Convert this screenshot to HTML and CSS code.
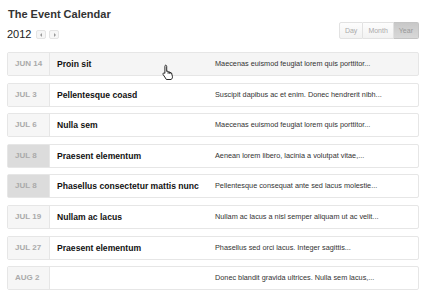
FILE: index.html
```html
<!DOCTYPE html>
<html lang="en">
  <head>
    <meta charset="UTF-8" />
    <title>The Event Calendar</title>
    <link rel="stylesheet" href="styles.css">
  </head>
  <body>
    <div class="calendar">
      <h1>The Event Calendar</h1>

      <div class="toolbar">
        <div class="year-nav">
          <span class="year">2012</span>
          <button class="nav-btn prev"></button>
          <button class="nav-btn next"></button>
        </div>
        <div class="views">
          <button class="view-btn">Day</button>
          <button class="view-btn">Month</button>
          <button class="view-btn active">Year</button>
        </div>
      </div>

      <div class="event-list">
        <div class="event-item hover">
          <div class="event-date">JUN 14</div>
          <div class="event-title">Proin sit</div>
          <div class="event-desc">Maecenas euismod feugiat lorem quis porttitor...</div>
          <svg class="cursor" width="13" height="16" viewBox="0 0 13 16">
            <path d="M4.5 1.2c.7 0 1.2.5 1.2 1.2v5l.3-.1c.6-.3 1.3 0 1.5.5l.1.2c.6-.3 1.3 0 1.5.6.6-.2 1.3.1 1.5.7l.8 3c.3 1.3-.2 2.5-1.3 3.2H5.4L2.3 10.8c-.5-.5-.5-1.2 0-1.6.5-.4 1.1-.3 1.6.1V2.4c0-.7.3-1.2.6-1.2z" fill="#fff" stroke="#111" stroke-width="0.9" stroke-linejoin="round"/>
            <path d="M7.1 7.6v2.2M8.6 8v1.8M10.1 8.6v1.4" stroke="#111" stroke-width="0.8"/>
          </svg>
        </div>
        <div class="event-item">
          <div class="event-date">JUL 3</div>
          <div class="event-title">Pellentesque coasd</div>
          <div class="event-desc">Suscipit dapibus ac et enim. Donec hendrerit nibh...</div>
        </div>
        <div class="event-item">
          <div class="event-date">JUL 6</div>
          <div class="event-title">Nulla sem</div>
          <div class="event-desc">Maecenas euismod feugiat lorem quis porttitor...</div>
        </div>
        <div class="event-item today">
          <div class="event-date">JUL 8</div>
          <div class="event-title">Praesent elementum</div>
          <div class="event-desc">Aenean lorem libero, lacinia a volutpat vitae,...</div>
        </div>
        <div class="event-item today">
          <div class="event-date">JUL 8</div>
          <div class="event-title">Phasellus consectetur mattis nunc</div>
          <div class="event-desc">Pellentesque consequat ante sed lacus molestie...</div>
        </div>
        <div class="event-item">
          <div class="event-date">JUL 19</div>
          <div class="event-title">Nullam ac lacus</div>
          <div class="event-desc">Nullam ac lacus a nisl semper aliquam ut ac velit...</div>
        </div>
        <div class="event-item">
          <div class="event-date">JUL 27</div>
          <div class="event-title">Praesent elementum</div>
          <div class="event-desc">Phasellus sed orci lacus. Integer sagittis...</div>
        </div>
        <div class="event-item">
          <div class="event-date">AUG 2</div>
          <div class="event-title"></div>
          <div class="event-desc">Donec blandit gravida ultrices. Nulla sem lacus,...</div>
        </div>
      </div>
    </div>
  </body>
</html>
```

FILE: styles.css
```css
body {
  font-family: "Liberation Sans", Arial, sans-serif;
  margin: 0;
  padding: 0 9px 0 7px;
  background: #fff;
  color: #222;
}

h1 {
  font-size: 11px;
  font-weight: bold;
  color: #333;
  margin: 0;
  padding-top: 8px;
  line-height: 12px;
  padding-left: 1px;
}

.toolbar {
  display: flex;
  justify-content: space-between;
  align-items: flex-start;
  margin-top: 2px;
  height: 30px;
}

.year-nav {
  display: flex;
  align-items: center;
  padding-top: 6px;
}

.year {
  font-size: 11px;
  color: #222;
  line-height: 12px;
  margin-right: 5px;
}

.nav-btn {
  width: 10px;
  height: 9px;
  padding: 0;
  margin: 0 3px 0 0;
  border: 1px solid #e4e4e4;
  border-radius: 2px;
  background: #f6f6f6;
  position: relative;
}

.nav-btn::after {
  content: "";
  position: absolute;
  top: 2px;
  left: 3px;
  border-top: 2px solid transparent;
  border-bottom: 2px solid transparent;
}

.nav-btn.prev::after {
  border-right: 2px solid #999;
}

.nav-btn.next::after {
  border-left: 2px solid #999;
  left: 4px;
}

.views {
  display: flex;
}

.view-btn {
  font-family: inherit;
  font-size: 7px;
  color: #aaaaaa;
  height: 17px;
  padding: 0 5px;
  border: 1px solid #e2e2e2;
  border-left: none;
  background: linear-gradient(#fdfdfd, #f2f2f2);
}

.view-btn:first-child {
  border-left: 1px solid #e2e2e2;
  border-radius: 2px 0 0 2px;
}

.view-btn:last-child {
  border-radius: 0 2px 2px 0;
}

.view-btn.active {
  background: linear-gradient(#c8c8c8, #d8d8d8);
  color: #999;
  border-color: #c4c4c4;
}

.event-list {
  display: flex;
  flex-direction: column;
  gap: 6.6px;
}

.event-item {
  display: flex;
  align-items: stretch;
  height: 22px;
  border: 1px solid #e6e6e6;
  border-radius: 2px;
  background: #fff;
  position: relative;
}

.event-item.hover {
  background: #f5f5f5;
}

.event-date {
  width: 34px;
  flex-shrink: 0;
  padding-left: 7px;
  background: #f6f6f6;
  border-right: 1px solid #e6e6e6;
  color: #aaa;
  font-size: 8px;
  font-weight: bold;
  line-height: 22px;
}

.event-item.today .event-date {
  background: #dcdcdc;
}

.event-title {
  width: 158px;
  padding-left: 7px;
  font-size: 8.6px;
  font-weight: bold;
  line-height: 22px;
  color: #111;
}

.event-desc {
  font-size: 7.3px;
  line-height: 22px;
  color: #333;
}

.cursor {
  position: absolute;
  left: 153px;
  top: 11px;
}
```
